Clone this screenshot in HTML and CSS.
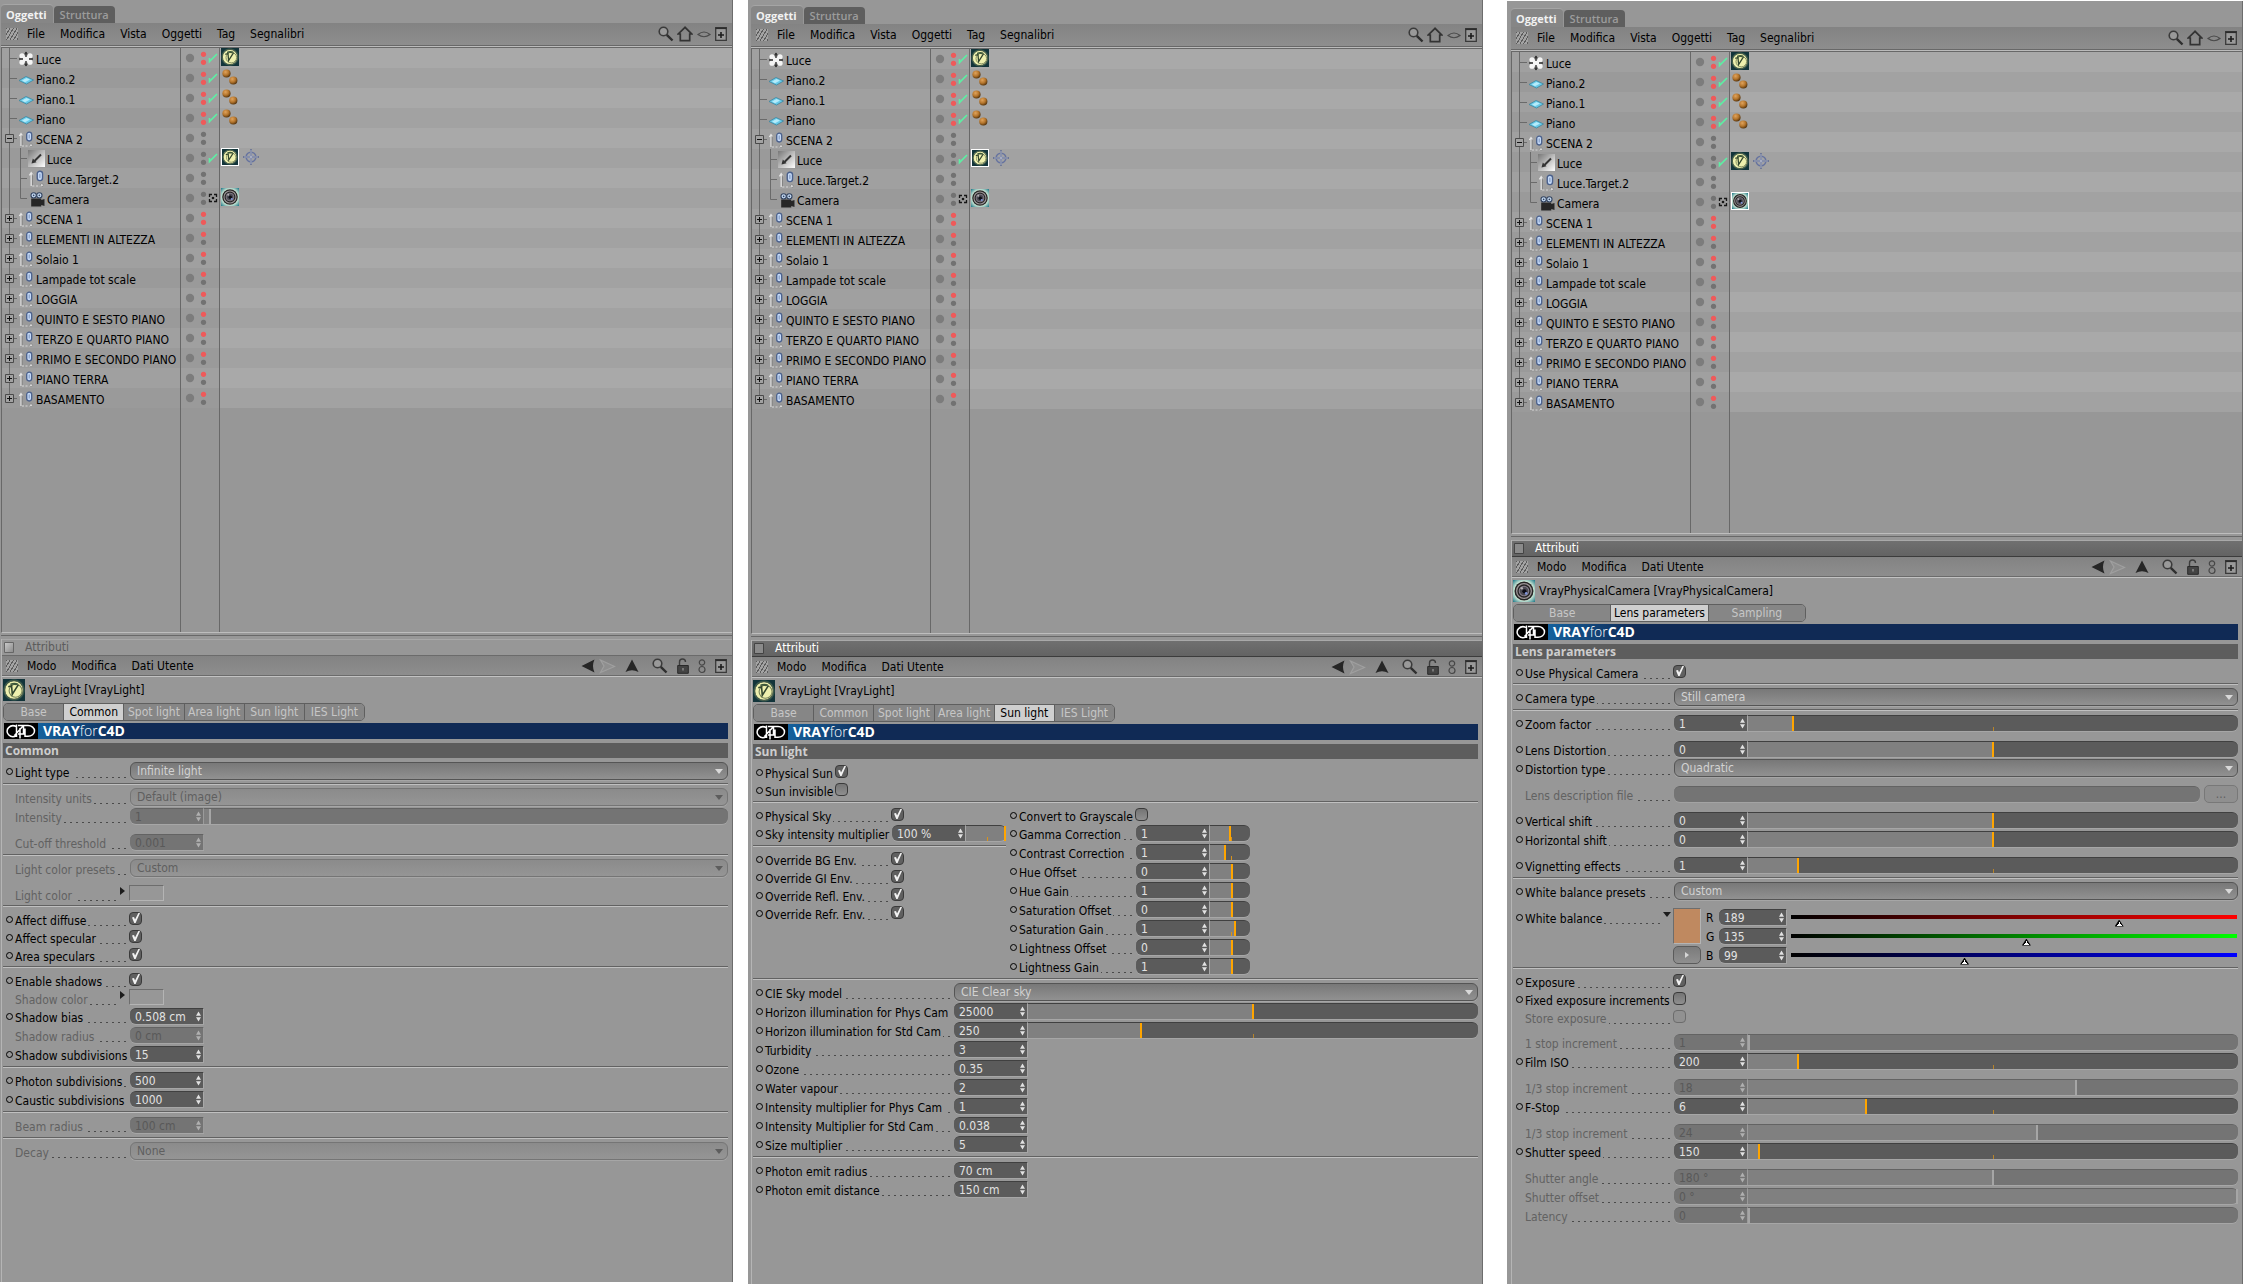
FILE: index.html
```html
<!DOCTYPE html>
<html lang="it">
<head>
<meta charset="utf-8">
<title>VRAYforC4D – Oggetti e Attributi</title>
<link rel="stylesheet" href="styles.css">
</head>
<body>
<svg class="defs" aria-hidden="true">
  <defs>
    <radialGradient id="gBall" cx=".38" cy=".32" r=".7"><stop offset="0" stop-color="#e0a35c"/><stop offset=".55" stop-color="#b4752c"/><stop offset="1" stop-color="#53320c"/></radialGradient>
    <radialGradient id="gV"><stop offset=".6" stop-color="#b9d58a"/><stop offset="1" stop-color="#12343a"/></radialGradient>
    <radialGradient id="gCam" r=".7"><stop offset=".6" stop-color="#d9f0dc"/><stop offset="1" stop-color="#1d7686"/></radialGradient>
    <linearGradient id="gSpot" x1="0" y1="0" x2="1" y2="1"><stop offset="0" stop-color="#777"/><stop offset="1" stop-color="#fff"/></linearGradient>
    <linearGradient id="gBox" x1="0" y1="0" x2="1" y2="1"><stop offset="0" stop-color="#ccc"/><stop offset="1" stop-color="#888"/></linearGradient>
  </defs>
  <symbol id="t-leaf" viewBox="0 0 16 20"><path d="M7.500 0V20M7 10.500H15" stroke="#6a6a6a" fill="none"/></symbol>
  <symbol id="t-plus" viewBox="0 0 16 20"><path d="M7.500 0V20M7 10.500H15" stroke="#6a6a6a" fill="none"/><path d="M3.500 6.500h8v8h-8z" fill="#a2a2a2" stroke="#4a4a4a"/><path d="M5 10.500h5M7.500 8v5" stroke="#111"/></symbol>
  <symbol id="t-last" viewBox="0 0 16 20"><path d="M7.500 0V10M7 10.500H15" stroke="#6a6a6a" fill="none"/><path d="M3.500 6.500h8v8h-8z" fill="#a2a2a2" stroke="#4a4a4a"/><path d="M5 10.500h5M7.500 8v5" stroke="#111"/></symbol>
  <symbol id="t-minus" viewBox="0 0 16 20"><path d="M7.500 0V20M7 10.500H15" stroke="#6a6a6a" fill="none"/><path d="M3.500 6.500h8v8h-8z" fill="#a2a2a2" stroke="#4a4a4a"/><path d="M5 10.500h5" stroke="#111"/></symbol>
  <symbol id="t-child" viewBox="0 0 26 20"><path d="M7.500 0V20M18.500 0V20M18 10.500H25" stroke="#6a6a6a" fill="none"/></symbol>
  <symbol id="t-clast" viewBox="0 0 26 20"><path d="M7.500 0V20M18.500 0V10.500H25" stroke="#6a6a6a" fill="none"/></symbol>

  <symbol id="i-omni" viewBox="0 0 16 16"><g fill="#f4f4f4"><circle cx="4" cy="4.800" r="2.600"/><circle cx="12" cy="4.800" r="2.600"/><circle cx="4" cy="11.200" r="2.600"/><circle cx="12" cy="11.200" r="2.600"/><circle cx="8" cy="8" r="3.400"/></g><path d="M8 6V1M8 10V15M1 8h4M11 8h4" stroke="#333" stroke-width="1.400"/><path d="M6 3.200L8 .500 10 3.200zM6 12.800L8 15.500 10 12.800z" fill="#333"/></symbol>
  <symbol id="i-plane" viewBox="0 0 16 16"><path d="M1 9.500L8 5.500 15.500 9 8.500 13z" fill="#6acbe9" stroke="#347f99" stroke-width=".7"/><path d="M4 9.500l4.500-2.500 3.500 1.500L7 11.300z" fill="#b5ecfb"/></symbol>
  <symbol id="i-null" viewBox="0 0 16 16"><path d="M3 3V15M1.300 5L3 2.500l1.700 2.500" stroke="#e4e4e4" fill="none" stroke-width="1.200"/><path d="M4.200 4V14.500" stroke="#777" stroke-width=".7"/><path d="M4 15H14" stroke="#d6d6d6" stroke-dasharray="2 1.500"/><rect x="8.700" y="1.200" width="5" height="8.800" rx="2.400" fill="#c4d9f7" stroke="#4b618c" stroke-width="1.300"/><path d="M11.200 3.500v4" stroke="#6b83ad" stroke-width=".8"/><circle cx="13" cy="14.300" r="1.500" fill="#d8d8d8" stroke="#777" stroke-width=".6"/></symbol>
  <symbol id="i-spot" viewBox="0 0 17 17"><path d="M0 0h17v17H0z" fill="url(#gSpot)"/><path d="M13 4.500L6.500 11" stroke="#333" stroke-width="2"/><path d="M3.500 13.500l1.300-5 3.700 3.700z" fill="#333"/></symbol>
  <symbol id="i-cam" viewBox="0 0 16 16"><path d="M3 8h9.500v1.500L15.500 8.500V15L12.500 14v1.500H3z" fill="#262626"/><circle cx="5.300" cy="5" r="2.500" fill="#c7dcf5" stroke="#31425e"/><circle cx="10.700" cy="5" r="2.500" fill="#c7dcf5" stroke="#31425e"/><circle cx="5.300" cy="5" r=".8" fill="#31425e"/><circle cx="10.700" cy="5" r=".8" fill="#31425e"/></symbol>
  <symbol id="i-v" viewBox="0 0 18 18"><path d="M0 0h18v18H0z" fill="url(#gV)"/><circle cx="9" cy="9" r="7.600" fill="#eef0ae" stroke="#30443a" stroke-width=".8"/><circle cx="10.300" cy="9.600" r="5.300" fill="none" stroke="#78855a" stroke-width=".9"/><path d="M4.300 6.300L7 5.500 7.600 12.500 12.600 4.600" fill="none" stroke="#33472f" stroke-width="1.300"/><path d="M6 3.700Q9 2.300 12.500 3.600L11 5.200Q8.500 4.500 6 5z" fill="#3d573a"/></symbol>
  <symbol id="i-lens" viewBox="0 0 18 18"><path d="M0 0h18v18H0z" fill="url(#gCam)"/><circle cx="9" cy="9" r="7.800" fill="#252525"/><circle cx="9" cy="9" r="6" fill="none" stroke="#9b9395" stroke-width="1.100"/><circle cx="9" cy="9" r="3.900" fill="#4b4a52" stroke="#877f8c" stroke-width=".9"/><circle cx="9.300" cy="9.300" r="1.700" fill="#0d0d16"/><circle cx="10.800" cy="11" r="1.100" fill="#7d93d8"/><circle cx="7.200" cy="6.800" r="1" fill="#b4b0b4"/></symbol>
  <symbol id="i-balls" viewBox="0 0 18 18"><circle cx="5.500" cy="5.500" r="4.100" fill="url(#gBall)"/><circle cx="12.300" cy="12.500" r="4.100" fill="url(#gBall)"/></symbol>
  <symbol id="i-target" viewBox="0 0 18 18"><circle cx="9" cy="9" r="4.800" fill="none" stroke="#66739f" stroke-width="1.600"/><circle cx="9" cy="9" r="2" fill="#8d9cce"/><path d="M9 1v16M1 9h16" stroke="#525d80" stroke-width="1.800"/><path d="M9 1.500v15M1.500 9h15" stroke="#d6dae8" stroke-width=".8"/></symbol>

  <symbol id="s-rr" viewBox="0 0 38 20"><circle cx="9" cy="10" r="4.200" fill="#7c7c7c"/><circle cx="22.500" cy="6.300" r="2.600" fill="#ee5a5a"/><circle cx="22.500" cy="14.300" r="2.600" fill="#ee5a5a"/></symbol>
  <symbol id="s-rg" viewBox="0 0 38 20"><circle cx="9" cy="10" r="4.200" fill="#7c7c7c"/><circle cx="22.500" cy="6.300" r="2.600" fill="#ee5a5a"/><circle cx="22.500" cy="14.300" r="2.600" fill="#727272"/></symbol>
  <symbol id="s-gg" viewBox="0 0 38 20"><circle cx="9" cy="10" r="4.200" fill="#7c7c7c"/><circle cx="22.500" cy="6.300" r="2.600" fill="#727272"/><circle cx="22.500" cy="14.300" r="2.600" fill="#727272"/></symbol>
  <symbol id="s-rrc" viewBox="0 0 38 20"><use href="#s-rr" width="38" height="20"/><path d="M28.500 10v3.500l7.500-7.500" fill="none" stroke="#5cf0a4" stroke-width="1.600"/></symbol>
  <symbol id="s-ggc" viewBox="0 0 38 20"><use href="#s-gg" width="38" height="20"/><path d="M28.500 10v3.500l7.500-7.500" fill="none" stroke="#5cf0a4" stroke-width="1.600"/></symbol>
  <symbol id="s-ggx" viewBox="0 0 38 20"><use href="#s-gg" width="38" height="20"/><path d="M28.500 9V6.500H31M33 6.500h2.500V9M35.500 11v2.500H33M31 13.500h-2.500V11" fill="none" stroke="#161616" stroke-width="1.300"/><circle cx="32" cy="10" r="1.300" fill="#161616"/></symbol>

  <symbol id="b-find" viewBox="0 0 16 16"><circle cx="5.500" cy="5.500" r="4.300" fill="#999" stroke="#3b3b3b" stroke-width="1.600"/><path d="M8.800 8.800L14.500 14.500" stroke="#2e2e2e" stroke-width="2.400"/></symbol>
  <symbol id="b-home" viewBox="0 0 16 16"><path d="M8 1.300L1.300 8H3.300V14.700H12.700V8H14.700z" fill="none" stroke="#333" stroke-width="1.700"/></symbol>
  <symbol id="b-eye" viewBox="0 0 16 16"><path d="M2 8.500Q8 3.500 14 8.500Q8 13 2 8.500z" fill="none" stroke="#4a4a4a" stroke-width="1.200"/></symbol>
  <symbol id="b-add" viewBox="0 0 12 16"><path d="M.7 1.700h10.600v12.600H.7z" fill="#999" stroke="#3a3a3a" stroke-width="1.300"/><path d="M.5 2.300h11" stroke="#2c2c2c" stroke-width="1.600"/><path d="M3 9h6M6 6v6" stroke="#1c1c1c" stroke-width="1.600"/></symbol>
  <symbol id="b-prev" viewBox="0 0 14 16"><path d="M.5 8L13.500 1.500Q10.500 8 13.500 14.500z" fill="#262626"/></symbol>
  <symbol id="b-next" viewBox="0 0 17 16"><path d="M1.500 2L15.500 8.500 1.500 14.500 5 8z" fill="#8f8f8f" stroke="#9f9f9f" stroke-width="1.200"/></symbol>
  <symbol id="b-up" viewBox="0 0 14 16"><path d="M7 1.500L13.500 14Q7 10.500.5 14z" fill="#262626"/></symbol>
  <symbol id="b-lock" viewBox="0 0 12 16"><path d="M2.500 7V4Q2.500 1 5.500 1T8.500 4" fill="none" stroke="#3d3d3d" stroke-width="1.400"/><path d="M.7 7.500h10.600v7.800H.7z" fill="#444" stroke="#2a2a2a"/><path d="M6 10v2.500" stroke="#aaa"/></symbol>
  <symbol id="b-eight" viewBox="0 0 8 16"><circle cx="4" cy="4.500" r="2.700" fill="none" stroke="#474747" stroke-width="1.200"/><circle cx="4" cy="11.500" r="3" fill="none" stroke="#474747" stroke-width="1.200"/></symbol>
  <symbol id="spin" viewBox="0 0 6 12"><path d="M0 5L3 0l3 5zM0 7l3 5 3-5z" fill="currentColor"/></symbol>
  <symbol id="logo" viewBox="0 0 34 16"><path d="M0 0h34v16H0z" fill="#000"/><path d="M12.500 3.800A6 5.300 0 1 0 12.500 12.500M12.500 1.500V14M10.500 12.500L19.500 2.500M16 5V15.500M19.500 2.500V10.500M14 2.500H24A6.500 5.400 0 0 1 24 13.300H21V5.500M14 11H21" fill="none" stroke="#fff" stroke-width="1.500"/></symbol>
</svg>

<main class="shots">
<!-- Pannello 1: VrayLight, scheda Common -->
<section class="panel p1">
  <nav class="dock"><button class="on">Oggetti</button><button>Struttura</button></nav>
  <div class="bar"><i class="grip"></i><button>File</button><button>Modifica</button><button>Vista</button><button>Oggetti</button><button>Tag</button><button>Segnalibri</button>
    <span class="tools obj"><svg width="16" height="16"><use href="#b-find"/></svg><svg width="16" height="16"><use href="#b-home"/></svg><svg width="16" height="16"><use href="#b-eye"/></svg><svg width="12" height="16"><use href="#b-add"/></svg></span></div>
  <ul class="tree">
    <li><div><svg class="tw"><use href="#t-leaf"/></svg><svg class="ic"><use href="#i-omni"/></svg>Luce</div><div><svg class="st"><use href="#s-rrc"/></svg></div><div><svg class="tg"><use href="#i-v"/></svg></div></li>
    <li><div><svg class="tw"><use href="#t-leaf"/></svg><svg class="ic"><use href="#i-plane"/></svg>Piano.2</div><div><svg class="st"><use href="#s-rrc"/></svg></div><div><svg class="tg"><use href="#i-balls"/></svg></div></li>
    <li><div><svg class="tw"><use href="#t-leaf"/></svg><svg class="ic"><use href="#i-plane"/></svg>Piano.1</div><div><svg class="st"><use href="#s-rrc"/></svg></div><div><svg class="tg"><use href="#i-balls"/></svg></div></li>
    <li><div><svg class="tw"><use href="#t-leaf"/></svg><svg class="ic"><use href="#i-plane"/></svg>Piano</div><div><svg class="st"><use href="#s-rrc"/></svg></div><div><svg class="tg"><use href="#i-balls"/></svg></div></li>
    <li><div><svg class="tw"><use href="#t-minus"/></svg><svg class="ic"><use href="#i-null"/></svg>SCENA 2</div><div><svg class="st"><use href="#s-gg"/></svg></div><div></div></li>
    <li class="sub"><div><svg class="tw"><use href="#t-child"/></svg><svg class="ic"><use href="#i-spot"/></svg>Luce</div><div><svg class="st"><use href="#s-ggc"/></svg></div><div><svg class="tg picked"><use href="#i-v"/></svg><svg class="tg"><use href="#i-target"/></svg></div></li>
    <li class="sub"><div><svg class="tw"><use href="#t-child"/></svg><svg class="ic"><use href="#i-null"/></svg>Luce.Target.2</div><div><svg class="st"><use href="#s-gg"/></svg></div><div></div></li>
    <li class="sub"><div><svg class="tw"><use href="#t-clast"/></svg><svg class="ic"><use href="#i-cam"/></svg>Camera</div><div><svg class="st"><use href="#s-ggx"/></svg></div><div><svg class="tg"><use href="#i-lens"/></svg></div></li>
    <li><div><svg class="tw"><use href="#t-plus"/></svg><svg class="ic"><use href="#i-null"/></svg>SCENA 1</div><div><svg class="st"><use href="#s-rr"/></svg></div><div></div></li>
    <li><div><svg class="tw"><use href="#t-plus"/></svg><svg class="ic"><use href="#i-null"/></svg>ELEMENTI IN ALTEZZA</div><div><svg class="st"><use href="#s-rg"/></svg></div><div></div></li>
    <li><div><svg class="tw"><use href="#t-plus"/></svg><svg class="ic"><use href="#i-null"/></svg>Solaio 1</div><div><svg class="st"><use href="#s-rg"/></svg></div><div></div></li>
    <li><div><svg class="tw"><use href="#t-plus"/></svg><svg class="ic"><use href="#i-null"/></svg>Lampade tot scale</div><div><svg class="st"><use href="#s-rg"/></svg></div><div></div></li>
    <li><div><svg class="tw"><use href="#t-plus"/></svg><svg class="ic"><use href="#i-null"/></svg>LOGGIA</div><div><svg class="st"><use href="#s-rg"/></svg></div><div></div></li>
    <li><div><svg class="tw"><use href="#t-plus"/></svg><svg class="ic"><use href="#i-null"/></svg>QUINTO E SESTO PIANO</div><div><svg class="st"><use href="#s-rg"/></svg></div><div></div></li>
    <li><div><svg class="tw"><use href="#t-plus"/></svg><svg class="ic"><use href="#i-null"/></svg>TERZO E QUARTO PIANO</div><div><svg class="st"><use href="#s-rg"/></svg></div><div></div></li>
    <li><div><svg class="tw"><use href="#t-plus"/></svg><svg class="ic"><use href="#i-null"/></svg>PRIMO E SECONDO PIANO</div><div><svg class="st"><use href="#s-rg"/></svg></div><div></div></li>
    <li><div><svg class="tw"><use href="#t-plus"/></svg><svg class="ic"><use href="#i-null"/></svg>PIANO TERRA</div><div><svg class="st"><use href="#s-rg"/></svg></div><div></div></li>
    <li><div><svg class="tw"><use href="#t-last"/></svg><svg class="ic"><use href="#i-null"/></svg>BASAMENTO</div><div><svg class="st"><use href="#s-rg"/></svg></div><div></div></li>
  </ul>
  <div class="attrs">
    <h2 class="title idle"><svg width="10" height="11"><path d="M.5.5h9v10h-9z" fill="url(#gBox)" stroke="#666"/></svg>Attributi</h2>
    <div class="bar low"><i class="grip"></i><button>Modo</button><button>Modifica</button><button>Dati Utente</button>
      <span class="tools att"><svg width="14" height="16"><use href="#b-prev"/></svg><svg width="17" height="16"><use href="#b-next"/></svg><svg width="14" height="16"><use href="#b-up"/></svg><svg width="16" height="16"><use href="#b-find"/></svg><svg width="12" height="16"><use href="#b-lock"/></svg><svg width="8" height="16"><use href="#b-eight"/></svg><svg width="12" height="16"><use href="#b-add"/></svg></span></div>
    <div class="object"><svg><use href="#i-v"/></svg>VrayLight [VrayLight]</div>
    <nav class="tabs"><button>Base</button><button class="on">Common</button><button>Spot light</button><button>Area light</button><button>Sun light</button><button>IES Light</button></nav>
    <div class="banner"><svg width="34" height="16"><use href="#logo"/></svg><b>VRAY<span>for</span>C4D</b></div>
    <h3>Common</h3>
    <form class="form">
      <div class="f"><label for="a1">Light type</label><div class="v"><span class="sel"><select id="a1"><option>Infinite light</option></select></span></div></div>
      <hr>
      <div class="f off"><label for="a2">Intensity units</label><div class="v"><span class="sel"><select id="a2" disabled><option>Default (image)</option></select></span></div></div>
      <div class="f off"><label for="a3">Intensity</label><div class="v"><span class="num"><input id="a3" value="1" disabled><svg><use href="#spin"/></svg></span><input type="range" aria-label="Intensity" value="1" style="--v:1%" disabled></div></div>
      <div class="f off gap"><label for="a4">Cut-off threshold</label><div class="v"><span class="num"><input id="a4" value="0.001" disabled><svg><use href="#spin"/></svg></span></div></div>
      <hr>
      <div class="f off"><label for="a5">Light color presets</label><div class="v"><span class="sel"><select id="a5" disabled><option>Custom</option></select></span></div></div>
      <div class="f c off gap"><label for="a6" class="more">Light color</label><div class="v"><button id="a6" type="button" class="swatch" aria-label="Light color"></button></div></div>
      <hr>
      <div class="f c"><label for="a7">Affect diffuse</label><div class="v"><input id="a7" type="checkbox" checked></div></div>
      <div class="f c"><label for="a8">Affect specular</label><div class="v"><input id="a8" type="checkbox" checked></div></div>
      <div class="f c"><label for="a9">Area speculars</label><div class="v"><input id="a9" type="checkbox" checked></div></div>
      <hr>
      <div class="f c"><label for="a10">Enable shadows</label><div class="v"><input id="a10" type="checkbox" checked></div></div>
      <div class="f c off"><label for="a11" class="more">Shadow color</label><div class="v"><button id="a11" type="button" class="swatch" aria-label="Shadow color"></button></div></div>
      <div class="f"><label for="a12">Shadow bias</label><div class="v"><span class="num"><input id="a12" value="0.508 cm"><svg><use href="#spin"/></svg></span></div></div>
      <div class="f off"><label for="a13">Shadow radius</label><div class="v"><span class="num"><input id="a13" value="0 cm" disabled><svg><use href="#spin"/></svg></span></div></div>
      <div class="f"><label for="a14">Shadow subdivisions</label><div class="v"><span class="num"><input id="a14" value="15"><svg><use href="#spin"/></svg></span></div></div>
      <hr>
      <div class="f"><label for="a15">Photon subdivisions</label><div class="v"><span class="num"><input id="a15" value="500"><svg><use href="#spin"/></svg></span></div></div>
      <div class="f"><label for="a16">Caustic subdivisions</label><div class="v"><span class="num"><input id="a16" value="1000"><svg><use href="#spin"/></svg></span></div></div>
      <hr>
      <div class="f off"><label for="a17">Beam radius</label><div class="v"><span class="num"><input id="a17" value="100 cm" disabled><svg><use href="#spin"/></svg></span></div></div>
      <hr>
      <div class="f off"><label for="a18">Decay</label><div class="v"><span class="sel"><select id="a18" disabled><option>None</option></select></span></div></div>
    </form>
  </div>
</section>

<!-- Pannello 2: VrayLight, scheda Sun light -->
<section class="panel p2">
  <nav class="dock"><button class="on">Oggetti</button><button>Struttura</button></nav>
  <div class="bar"><i class="grip"></i><button>File</button><button>Modifica</button><button>Vista</button><button>Oggetti</button><button>Tag</button><button>Segnalibri</button>
    <span class="tools obj"><svg width="16" height="16"><use href="#b-find"/></svg><svg width="16" height="16"><use href="#b-home"/></svg><svg width="16" height="16"><use href="#b-eye"/></svg><svg width="12" height="16"><use href="#b-add"/></svg></span></div>
  <ul class="tree">
    <li><div><svg class="tw"><use href="#t-leaf"/></svg><svg class="ic"><use href="#i-omni"/></svg>Luce</div><div><svg class="st"><use href="#s-rrc"/></svg></div><div><svg class="tg"><use href="#i-v"/></svg></div></li>
    <li><div><svg class="tw"><use href="#t-leaf"/></svg><svg class="ic"><use href="#i-plane"/></svg>Piano.2</div><div><svg class="st"><use href="#s-rrc"/></svg></div><div><svg class="tg"><use href="#i-balls"/></svg></div></li>
    <li><div><svg class="tw"><use href="#t-leaf"/></svg><svg class="ic"><use href="#i-plane"/></svg>Piano.1</div><div><svg class="st"><use href="#s-rrc"/></svg></div><div><svg class="tg"><use href="#i-balls"/></svg></div></li>
    <li><div><svg class="tw"><use href="#t-leaf"/></svg><svg class="ic"><use href="#i-plane"/></svg>Piano</div><div><svg class="st"><use href="#s-rrc"/></svg></div><div><svg class="tg"><use href="#i-balls"/></svg></div></li>
    <li><div><svg class="tw"><use href="#t-minus"/></svg><svg class="ic"><use href="#i-null"/></svg>SCENA 2</div><div><svg class="st"><use href="#s-gg"/></svg></div><div></div></li>
    <li class="sub"><div><svg class="tw"><use href="#t-child"/></svg><svg class="ic"><use href="#i-spot"/></svg>Luce</div><div><svg class="st"><use href="#s-ggc"/></svg></div><div><svg class="tg picked"><use href="#i-v"/></svg><svg class="tg"><use href="#i-target"/></svg></div></li>
    <li class="sub"><div><svg class="tw"><use href="#t-child"/></svg><svg class="ic"><use href="#i-null"/></svg>Luce.Target.2</div><div><svg class="st"><use href="#s-gg"/></svg></div><div></div></li>
    <li class="sub"><div><svg class="tw"><use href="#t-clast"/></svg><svg class="ic"><use href="#i-cam"/></svg>Camera</div><div><svg class="st"><use href="#s-ggx"/></svg></div><div><svg class="tg"><use href="#i-lens"/></svg></div></li>
    <li><div><svg class="tw"><use href="#t-plus"/></svg><svg class="ic"><use href="#i-null"/></svg>SCENA 1</div><div><svg class="st"><use href="#s-rr"/></svg></div><div></div></li>
    <li><div><svg class="tw"><use href="#t-plus"/></svg><svg class="ic"><use href="#i-null"/></svg>ELEMENTI IN ALTEZZA</div><div><svg class="st"><use href="#s-rg"/></svg></div><div></div></li>
    <li><div><svg class="tw"><use href="#t-plus"/></svg><svg class="ic"><use href="#i-null"/></svg>Solaio 1</div><div><svg class="st"><use href="#s-rg"/></svg></div><div></div></li>
    <li><div><svg class="tw"><use href="#t-plus"/></svg><svg class="ic"><use href="#i-null"/></svg>Lampade tot scale</div><div><svg class="st"><use href="#s-rg"/></svg></div><div></div></li>
    <li><div><svg class="tw"><use href="#t-plus"/></svg><svg class="ic"><use href="#i-null"/></svg>LOGGIA</div><div><svg class="st"><use href="#s-rg"/></svg></div><div></div></li>
    <li><div><svg class="tw"><use href="#t-plus"/></svg><svg class="ic"><use href="#i-null"/></svg>QUINTO E SESTO PIANO</div><div><svg class="st"><use href="#s-rg"/></svg></div><div></div></li>
    <li><div><svg class="tw"><use href="#t-plus"/></svg><svg class="ic"><use href="#i-null"/></svg>TERZO E QUARTO PIANO</div><div><svg class="st"><use href="#s-rg"/></svg></div><div></div></li>
    <li><div><svg class="tw"><use href="#t-plus"/></svg><svg class="ic"><use href="#i-null"/></svg>PRIMO E SECONDO PIANO</div><div><svg class="st"><use href="#s-rg"/></svg></div><div></div></li>
    <li><div><svg class="tw"><use href="#t-plus"/></svg><svg class="ic"><use href="#i-null"/></svg>PIANO TERRA</div><div><svg class="st"><use href="#s-rg"/></svg></div><div></div></li>
    <li><div><svg class="tw"><use href="#t-last"/></svg><svg class="ic"><use href="#i-null"/></svg>BASAMENTO</div><div><svg class="st"><use href="#s-rg"/></svg></div><div></div></li>
  </ul>
  <div class="attrs">
    <h2 class="title"><svg width="10" height="11"><path d="M.5.5h9v10h-9z" fill="#8a8a8a" stroke="#444"/></svg>Attributi</h2>
    <div class="bar low"><i class="grip"></i><button>Modo</button><button>Modifica</button><button>Dati Utente</button>
      <span class="tools att"><svg width="14" height="16"><use href="#b-prev"/></svg><svg width="17" height="16"><use href="#b-next"/></svg><svg width="14" height="16"><use href="#b-up"/></svg><svg width="16" height="16"><use href="#b-find"/></svg><svg width="12" height="16"><use href="#b-lock"/></svg><svg width="8" height="16"><use href="#b-eight"/></svg><svg width="12" height="16"><use href="#b-add"/></svg></span></div>
    <div class="object"><svg><use href="#i-v"/></svg>VrayLight [VrayLight]</div>
    <nav class="tabs"><button>Base</button><button>Common</button><button>Spot light</button><button>Area light</button><button class="on">Sun light</button><button>IES Light</button></nav>
    <div class="banner"><svg width="34" height="16"><use href="#logo"/></svg><b>VRAY<span>for</span>C4D</b></div>
    <h3>Sun light</h3>
    <form class="form">
      <div class="sun">
        <div class="f c"><label for="b1">Physical Sun</label><div class="v"><input id="b1" type="checkbox" checked></div></div>
        <div class="f c"><label for="b2">Sun invisible</label><div class="v"><input id="b2" type="checkbox"></div></div>
      </div>
      <hr>
      <div class="duo">
        <div class="sky">
          <div class="f c"><label for="b3">Physical Sky</label><div class="v"><input id="b3" type="checkbox" checked></div></div>
          <div class="f"><label for="b4">Sky intensity multiplier</label><div class="v"><span class="num"><input id="b4" value="100 %"><svg><use href="#spin"/></svg></span><input type="range" class="tick" aria-label="Sky intensity multiplier" value="100" style="--v:100%"></div></div>
          <hr>
          <div class="f c"><label for="b5">Override BG Env.</label><div class="v"><input id="b5" type="checkbox" checked></div></div>
          <div class="f c"><label for="b6">Override GI Env.</label><div class="v"><input id="b6" type="checkbox" checked></div></div>
          <div class="f c"><label for="b7">Override Refl. Env.</label><div class="v"><input id="b7" type="checkbox" checked></div></div>
          <div class="f c"><label for="b8">Override Refr. Env.</label><div class="v"><input id="b8" type="checkbox" checked></div></div>
        </div>
        <div class="tone">
          <div class="f c"><label for="b9">Convert to Grayscale</label><div class="v"><input id="b9" type="checkbox"></div></div>
          <div class="f"><label for="b10">Gamma Correction</label><div class="v"><span class="num"><input id="b10" value="1"><svg><use href="#spin"/></svg></span><input type="range" class="tick" aria-label="Gamma Correction" value="50" style="--v:50%"></div></div>
          <div class="f"><label for="b11">Contrast Correction</label><div class="v"><span class="num"><input id="b11" value="1"><svg><use href="#spin"/></svg></span><input type="range" class="tick" aria-label="Contrast Correction" value="38" style="--v:38%"></div></div>
          <div class="f"><label for="b12">Hue Offset</label><div class="v"><span class="num"><input id="b12" value="0"><svg><use href="#spin"/></svg></span><input type="range" aria-label="Hue Offset" value="55" style="--v:55%"></div></div>
          <div class="f"><label for="b13">Hue Gain</label><div class="v"><span class="num"><input id="b13" value="1"><svg><use href="#spin"/></svg></span><input type="range" aria-label="Hue Gain" value="55" style="--v:55%"></div></div>
          <div class="f"><label for="b14">Saturation Offset</label><div class="v"><span class="num"><input id="b14" value="0"><svg><use href="#spin"/></svg></span><input type="range" aria-label="Saturation Offset" value="55" style="--v:55%"></div></div>
          <div class="f"><label for="b15">Saturation Gain</label><div class="v"><span class="num"><input id="b15" value="1"><svg><use href="#spin"/></svg></span><input type="range" class="tick" aria-label="Saturation Gain" value="62" style="--v:62%"></div></div>
          <div class="f"><label for="b16">Lightness Offset</label><div class="v"><span class="num"><input id="b16" value="0"><svg><use href="#spin"/></svg></span><input type="range" aria-label="Lightness Offset" value="55" style="--v:55%"></div></div>
          <div class="f"><label for="b17">Lightness Gain</label><div class="v"><span class="num"><input id="b17" value="1"><svg><use href="#spin"/></svg></span><input type="range" aria-label="Lightness Gain" value="55" style="--v:55%"></div></div>
        </div>
      </div>
      <hr>
      <div class="f"><label for="b18">CIE Sky model</label><div class="v"><span class="sel"><select id="b18"><option>CIE Clear sky</option></select></span></div></div>
      <div class="f"><label for="b19">Horizon illumination for Phys Cam</label><div class="v"><span class="num"><input id="b19" value="25000"><svg><use href="#spin"/></svg></span><input type="range" aria-label="Horizon illumination for Phys Cam" value="50" style="--v:50%"></div></div>
      <div class="f"><label for="b20">Horizon illumination for Std Cam</label><div class="v"><span class="num"><input id="b20" value="250"><svg><use href="#spin"/></svg></span><input type="range" class="tick" aria-label="Horizon illumination for Std Cam" value="25" style="--v:25%"></div></div>
      <div class="f"><label for="b21">Turbidity</label><div class="v"><span class="num"><input id="b21" value="3"><svg><use href="#spin"/></svg></span></div></div>
      <div class="f"><label for="b22">Ozone</label><div class="v"><span class="num"><input id="b22" value="0.35"><svg><use href="#spin"/></svg></span></div></div>
      <div class="f"><label for="b23">Water vapour</label><div class="v"><span class="num"><input id="b23" value="2"><svg><use href="#spin"/></svg></span></div></div>
      <div class="f"><label for="b24">Intensity multiplier for Phys Cam</label><div class="v"><span class="num"><input id="b24" value="1"><svg><use href="#spin"/></svg></span></div></div>
      <div class="f"><label for="b25">Intensity Multiplier for Std Cam</label><div class="v"><span class="num"><input id="b25" value="0.038"><svg><use href="#spin"/></svg></span></div></div>
      <div class="f"><label for="b26">Size multiplier</label><div class="v"><span class="num"><input id="b26" value="5"><svg><use href="#spin"/></svg></span></div></div>
      <hr>
      <div class="f"><label for="b27">Photon emit radius</label><div class="v"><span class="num"><input id="b27" value="70 cm"><svg><use href="#spin"/></svg></span></div></div>
      <div class="f"><label for="b28">Photon emit distance</label><div class="v"><span class="num"><input id="b28" value="150 cm"><svg><use href="#spin"/></svg></span></div></div>
    </form>
  </div>
</section>

<!-- Pannello 3: VrayPhysicalCamera, scheda Lens parameters -->
<section class="panel p3">
  <nav class="dock"><button class="on">Oggetti</button><button>Struttura</button></nav>
  <div class="bar"><i class="grip"></i><button>File</button><button>Modifica</button><button>Vista</button><button>Oggetti</button><button>Tag</button><button>Segnalibri</button>
    <span class="tools obj"><svg width="16" height="16"><use href="#b-find"/></svg><svg width="16" height="16"><use href="#b-home"/></svg><svg width="16" height="16"><use href="#b-eye"/></svg><svg width="12" height="16"><use href="#b-add"/></svg></span></div>
  <ul class="tree">
    <li><div><svg class="tw"><use href="#t-leaf"/></svg><svg class="ic"><use href="#i-omni"/></svg>Luce</div><div><svg class="st"><use href="#s-rrc"/></svg></div><div><svg class="tg"><use href="#i-v"/></svg></div></li>
    <li><div><svg class="tw"><use href="#t-leaf"/></svg><svg class="ic"><use href="#i-plane"/></svg>Piano.2</div><div><svg class="st"><use href="#s-rrc"/></svg></div><div><svg class="tg"><use href="#i-balls"/></svg></div></li>
    <li><div><svg class="tw"><use href="#t-leaf"/></svg><svg class="ic"><use href="#i-plane"/></svg>Piano.1</div><div><svg class="st"><use href="#s-rrc"/></svg></div><div><svg class="tg"><use href="#i-balls"/></svg></div></li>
    <li><div><svg class="tw"><use href="#t-leaf"/></svg><svg class="ic"><use href="#i-plane"/></svg>Piano</div><div><svg class="st"><use href="#s-rrc"/></svg></div><div><svg class="tg"><use href="#i-balls"/></svg></div></li>
    <li><div><svg class="tw"><use href="#t-minus"/></svg><svg class="ic"><use href="#i-null"/></svg>SCENA 2</div><div><svg class="st"><use href="#s-gg"/></svg></div><div></div></li>
    <li class="sub"><div><svg class="tw"><use href="#t-child"/></svg><svg class="ic"><use href="#i-spot"/></svg>Luce</div><div><svg class="st"><use href="#s-ggc"/></svg></div><div><svg class="tg"><use href="#i-v"/></svg><svg class="tg"><use href="#i-target"/></svg></div></li>
    <li class="sub"><div><svg class="tw"><use href="#t-child"/></svg><svg class="ic"><use href="#i-null"/></svg>Luce.Target.2</div><div><svg class="st"><use href="#s-gg"/></svg></div><div></div></li>
    <li class="sub"><div><svg class="tw"><use href="#t-clast"/></svg><svg class="ic"><use href="#i-cam"/></svg>Camera</div><div><svg class="st"><use href="#s-ggx"/></svg></div><div><svg class="tg picked"><use href="#i-lens"/></svg></div></li>
    <li><div><svg class="tw"><use href="#t-plus"/></svg><svg class="ic"><use href="#i-null"/></svg>SCENA 1</div><div><svg class="st"><use href="#s-rr"/></svg></div><div></div></li>
    <li><div><svg class="tw"><use href="#t-plus"/></svg><svg class="ic"><use href="#i-null"/></svg>ELEMENTI IN ALTEZZA</div><div><svg class="st"><use href="#s-rg"/></svg></div><div></div></li>
    <li><div><svg class="tw"><use href="#t-plus"/></svg><svg class="ic"><use href="#i-null"/></svg>Solaio 1</div><div><svg class="st"><use href="#s-rg"/></svg></div><div></div></li>
    <li><div><svg class="tw"><use href="#t-plus"/></svg><svg class="ic"><use href="#i-null"/></svg>Lampade tot scale</div><div><svg class="st"><use href="#s-rg"/></svg></div><div></div></li>
    <li><div><svg class="tw"><use href="#t-plus"/></svg><svg class="ic"><use href="#i-null"/></svg>LOGGIA</div><div><svg class="st"><use href="#s-rg"/></svg></div><div></div></li>
    <li><div><svg class="tw"><use href="#t-plus"/></svg><svg class="ic"><use href="#i-null"/></svg>QUINTO E SESTO PIANO</div><div><svg class="st"><use href="#s-rg"/></svg></div><div></div></li>
    <li><div><svg class="tw"><use href="#t-plus"/></svg><svg class="ic"><use href="#i-null"/></svg>TERZO E QUARTO PIANO</div><div><svg class="st"><use href="#s-rg"/></svg></div><div></div></li>
    <li><div><svg class="tw"><use href="#t-plus"/></svg><svg class="ic"><use href="#i-null"/></svg>PRIMO E SECONDO PIANO</div><div><svg class="st"><use href="#s-rg"/></svg></div><div></div></li>
    <li><div><svg class="tw"><use href="#t-plus"/></svg><svg class="ic"><use href="#i-null"/></svg>PIANO TERRA</div><div><svg class="st"><use href="#s-rg"/></svg></div><div></div></li>
    <li><div><svg class="tw"><use href="#t-last"/></svg><svg class="ic"><use href="#i-null"/></svg>BASAMENTO</div><div><svg class="st"><use href="#s-rg"/></svg></div><div></div></li>
  </ul>
  <div class="attrs">
    <h2 class="title"><svg width="10" height="11"><path d="M.5.5h9v10h-9z" fill="#8a8a8a" stroke="#444"/></svg>Attributi</h2>
    <div class="bar low"><i class="grip"></i><button>Modo</button><button>Modifica</button><button>Dati Utente</button>
      <span class="tools att"><svg width="14" height="16"><use href="#b-prev"/></svg><svg width="17" height="16"><use href="#b-next"/></svg><svg width="14" height="16"><use href="#b-up"/></svg><svg width="16" height="16"><use href="#b-find"/></svg><svg width="12" height="16"><use href="#b-lock"/></svg><svg width="8" height="16"><use href="#b-eight"/></svg><svg width="12" height="16"><use href="#b-add"/></svg></span></div>
    <div class="object"><svg><use href="#i-lens"/></svg>VrayPhysicalCamera [VrayPhysicalCamera]</div>
    <nav class="tabs wide"><button>Base</button><button class="on">Lens parameters</button><button>Sampling</button></nav>
    <div class="banner"><svg width="34" height="16"><use href="#logo"/></svg><b>VRAY<span>for</span>C4D</b></div>
    <h3>Lens parameters</h3>
    <form class="form">
      <div class="f c"><label for="c1">Use Physical Camera</label><div class="v"><input id="c1" type="checkbox" checked></div></div>
      <hr>
      <div class="f"><label for="c2">Camera type</label><div class="v"><span class="sel"><select id="c2"><option>Still camera</option></select></span></div></div>
      <hr>
      <div class="f"><label for="c3">Zoom factor</label><div class="v"><span class="num"><input id="c3" value="1"><svg><use href="#spin"/></svg></span><input type="range" class="tick" aria-label="Zoom factor" value="9" style="--v:9%"></div></div>
      <div class="f gap"><label for="c4">Lens Distortion</label><div class="v"><span class="num"><input id="c4" value="0"><svg><use href="#spin"/></svg></span><input type="range" aria-label="Lens Distortion" value="50" style="--v:50%"></div></div>
      <div class="f"><label for="c5">Distortion type</label><div class="v"><span class="sel"><select id="c5"><option>Quadratic</option></select></span></div></div>
      <div class="f off gap"><label for="c6">Lens description file</label><div class="v"><input id="c6" class="path" disabled><button type="button" class="btn dots" disabled>...</button></div></div>
      <div class="f gap"><label for="c7">Vertical shift</label><div class="v"><span class="num"><input id="c7" value="0"><svg><use href="#spin"/></svg></span><input type="range" aria-label="Vertical shift" value="50" style="--v:50%"></div></div>
      <div class="f"><label for="c8">Horizontal shift</label><div class="v"><span class="num"><input id="c8" value="0"><svg><use href="#spin"/></svg></span><input type="range" aria-label="Horizontal shift" value="50" style="--v:50%"></div></div>
      <div class="f gap"><label for="c9">Vignetting effects</label><div class="v"><span class="num"><input id="c9" value="1"><svg><use href="#spin"/></svg></span><input type="range" class="tick" aria-label="Vignetting effects" value="10" style="--v:10%"></div></div>
      <hr>
      <div class="f"><label for="c10">White balance presets</label><div class="v"><span class="sel"><select id="c10"><option>Custom</option></select></span></div></div>
      <div class="f gap wb"><label for="c11" class="more">White balance</label>
        <div class="v">
          <div class="pick"><button id="c11" type="button" class="swatch tan" aria-label="White balance"></button><button type="button" class="btn go" aria-label="Apri"></button></div>
          <div class="rgb">
            <label for="c12">R</label><span class="num"><input id="c12" value="189"><svg><use href="#spin"/></svg></span><input type="range" class="chan red" aria-label="Rosso" max="255" value="189">
            <label for="c13">G</label><span class="num"><input id="c13" value="135"><svg><use href="#spin"/></svg></span><input type="range" class="chan green" aria-label="Verde" max="255" value="135">
            <label for="c14">B</label><span class="num"><input id="c14" value="99"><svg><use href="#spin"/></svg></span><input type="range" class="chan blue" aria-label="Blu" max="255" value="99">
          </div>
        </div></div>
      <hr>
      <div class="f c"><label for="c15">Exposure</label><div class="v"><input id="c15" type="checkbox" checked></div></div>
      <div class="f c"><label for="c16">Fixed exposure increments</label><div class="v"><input id="c16" type="checkbox"></div></div>
      <div class="f c off"><label for="c17">Store exposure</label><div class="v"><input id="c17" type="checkbox" disabled></div></div>
      <div class="f off gap"><label for="c18">1 stop increment</label><div class="v"><span class="num"><input id="c18" value="1" disabled><svg><use href="#spin"/></svg></span><input type="range" aria-label="1 stop increment" value="0" style="--v:0%" disabled></div></div>
      <div class="f"><label for="c19">Film ISO</label><div class="v"><span class="num"><input id="c19" value="200"><svg><use href="#spin"/></svg></span><input type="range" class="tick" aria-label="Film ISO" value="10" style="--v:10%"></div></div>
      <div class="f off gap"><label for="c20">1/3 stop increment</label><div class="v"><span class="num"><input id="c20" value="18" disabled><svg><use href="#spin"/></svg></span><input type="range" aria-label="1/3 stop increment ISO" value="67" style="--v:67%" disabled></div></div>
      <div class="f"><label for="c21">F-Stop</label><div class="v"><span class="num"><input id="c21" value="6"><svg><use href="#spin"/></svg></span><input type="range" class="tick" aria-label="F-Stop" value="24" style="--v:24%"></div></div>
      <div class="f off gap"><label for="c22">1/3 stop increment</label><div class="v"><span class="num"><input id="c22" value="24" disabled><svg><use href="#spin"/></svg></span><input type="range" aria-label="1/3 stop increment F" value="59" style="--v:59%" disabled></div></div>
      <div class="f"><label for="c23">Shutter speed</label><div class="v"><span class="num"><input id="c23" value="150"><svg><use href="#spin"/></svg></span><input type="range" class="tick" aria-label="Shutter speed" value="2" style="--v:2%"></div></div>
      <div class="f off gap"><label for="c24">Shutter angle</label><div class="v"><span class="num"><input id="c24" value="180 °" disabled><svg><use href="#spin"/></svg></span><input type="range" aria-label="Shutter angle" value="50" style="--v:50%" disabled></div></div>
      <div class="f off"><label for="c25">Shutter offset</label><div class="v"><span class="num"><input id="c25" value="0 °" disabled><svg><use href="#spin"/></svg></span><input type="range" aria-label="Shutter offset" value="100" style="--v:100%" disabled></div></div>
      <div class="f off"><label for="c26">Latency</label><div class="v"><span class="num"><input id="c26" value="0" disabled><svg><use href="#spin"/></svg></span><input type="range" aria-label="Latency" value="0" style="--v:0%" disabled></div></div>
    </form>
  </div>
</section>
</main>
</body>
</html>
```
FILE: styles.css
```css
* { box-sizing: border-box; }
body {
  margin: 0;
  background: #fff;
  color: #000;
  font: 12px/16px "DejaVu Sans Condensed", "DejaVu Sans", sans-serif;
}
button, input, select { font: inherit; color: inherit; margin: 0; padding: 0; border: 0; background: none; border-radius: 0; }
.defs { display: block; width: 0; height: 0; position: absolute; }
svg { display: block; flex: none; }

.shots {
  display: grid;
  grid-template-columns: 733fr 750fr 760fr;
  min-height: 100vh;
}
.panel { display: flex; flex-direction: column; background: #979797; border-right: 1px solid #6d6d6d; }
.p1 { margin-bottom: 2px; }
.p2 { margin-left: 15px; padding-left: 2px; }
.p3 { margin: 1px 0 0 24px; padding-left: 3px; }

/* tabs of the docked managers */
.dock { display: flex; align-items: flex-end; height: 23px; padding-left: 1px; gap: 1px; }
.p2 .dock { height: 24px; }
.p3 .dock { height: 26px; }
.dock button { height: 17px; padding: 0 6px; background: #5e5e5e; color: #9c9c9c; border-radius: 4px 4px 0 0; line-height: 17px; font-family: "Open Sans", "Noto Sans", sans-serif; font-size: 11px; font-weight: 600; }
.dock button.on { height: 19px; padding: 0 6px 0 5px; background: #868686; color: #f2f2f2; font-weight: 700; border-top: 1px solid #a5a5a5; }

/* menu bars */
.bar {
  display: flex; align-items: center; gap: 15px;
  height: 22px; margin-left: 1px; padding: 0 5px;
  background: linear-gradient(#838383, #8e8e8e);
}
.bar .grip { width: 12px; height: 12px; margin-right: -6px; background: repeating-linear-gradient(120deg, #5c5c5c 0 1px, #a3a3a3 1px 3px); }
.tools { display: flex; margin-left: auto; }
.tools.obj { gap: 3px; }
.tools.att { gap: 9px; }
.tools.att svg:nth-child(2) { margin-left: -5px; }
.tools.att svg:nth-child(4) { margin-left: 4px; }
.bar.low { height: 21px; border-bottom: 1px solid #c2c2c2; box-shadow: inset 0 -1px #6b6b6b; }

/* object tree */
.tree {
  list-style: none; margin: 2px 0 0 1px; padding: 0 0 224px;
  border: 1px solid #686868; border-right: 0; border-bottom-color: #bdbdbd;
  background:
    linear-gradient(#686868, #686868) 178px 0 / 1px 100% no-repeat,
    linear-gradient(#686868, #686868) 217px 0 / 1px 100% no-repeat;
  box-shadow: 0 -1px #bbb, 0 -2px #686868, 0 2px #979797, 0 3px #686868;
}
.p3 .tree { padding-bottom: 121px; }
.tree li { display: grid; grid-template: 20px / 179px 39px 1fr; }
.tree li > div { display: flex; background: #a0a0a0; border-right: 1px solid #686868; line-height: 24px; white-space: nowrap; min-width: 0; }
.tree li > div:last-child { border-right: 0; background: #a9a9a9; padding-left: 1px; }
.tree li:nth-child(even) > div { background: #9a9a9a; }
.tree li:nth-child(even) > div:last-child { background: #a2a2a2; }
.tw { width: 16px; height: 20px; }
.ic { width: 16px; height: 16px; margin: 3px 2px 0 0; }
.sub .tw { width: 26px; }
.sub .ic { width: 17px; height: 17px; margin-top: 2px; }
.st { width: 38px; height: 20px; }
.tg { width: 18px; height: 18px; margin-right: 3px; }
.tg.picked { border: 1px solid #fff; }

/* attribute manager */
.attrs { margin: 6px 0 0 1px; flex: 1; border-left: 1px solid #b5b5b5; }
.title {
  display: flex; align-items: center; gap: 11px;
  height: 17px; margin: 0; padding-left: 2px;
  background: linear-gradient(#707070, #636363); color: #fff;
  border-bottom: 1px solid #3c3c3c; border-top: 1px solid #a9a9a9;
  font-size: 12px; font-weight: 400; line-height: 15px;
}
.title.idle { background: #979797; color: #5c5c5c; border-bottom-color: #6b6b6b; }
.attrs .bar { margin-left: 0; padding-left: 4px; }
.object { display: flex; align-items: center; gap: 4px; height: 22px; margin: 2px 0 2px 1px; }
.object svg { width: 22px; height: 22px; }
.tabs { display: flex; width: 362px; height: 18px; margin-left: 1px; border: 1px solid #5f5f5f; border-radius: 5px; overflow: hidden; }
.tabs button { flex: 1 1 0; background: #868686; color: #c6c6c6; white-space: nowrap; line-height: 16px; }
.tabs button + button { border-left: 1px solid #5f5f5f; }
.tabs button.on { background: #cfcfcf; color: #000; }
.tabs.wide { width: 293px; }
.banner {
  display: flex; align-items: center; gap: 5px; height: 16px; margin: 2px 4px 4px 2px;
  background: linear-gradient(90deg, #14619d 34px, #102a55 120px); color: #fff;
}
.banner b { font: 700 14px/16px "Open Sans", "Noto Sans", sans-serif; }
.banner span { font-weight: 300; }
h3 { height: 15px; margin: 0 4px 4px 1px; padding-left: 2px; background: #5d5d5d; color: #cdcdcd; font: 700 12px/15px "Open Sans", "Noto Sans", sans-serif; }

.form { --lab: 127px; margin-right: 4px; }
.p2 .form { --lab: 201px; }
.p2 .sun { --lab: 83px; }
.p2 .sky { --lab: 139px; }
.p2 .tone { --lab: 129px; width: 244px; }
.p3 .form { --lab: 161px; }
.duo { display: grid; grid-template-columns: 254px 1fr; }

.f { display: grid; grid-template-columns: var(--lab) 1fr; height: 19px; }
.f.c { height: 18px; }
.f.gap { margin-top: 7px; }
.form hr { height: 2px; margin: 2px 0 3px 1px; border: 0; background: linear-gradient(#626262 50%, #c0c0c0 50%); }
.f > label { display: flex; align-items: center; padding: 3px 3px 0 4px; white-space: nowrap; min-width: 0; }
.f > label::before { content: ""; flex: none; width: 5px; height: 5px; margin: 0 2px 3px 0; border: 1px solid #000; border-radius: 50%; }
.f > label::after { content: ""; flex: 1; height: 1px; margin: 8px 0 0 2px; background: repeating-linear-gradient(270deg, #4a4a4a 0 2px, transparent 2px 6px); }
.f.off > label { color: #626262; }
.f.off > label::before { visibility: hidden; }
.f > label.more::after { margin-right: 10px; }
.v { display: flex; align-items: flex-start; min-width: 0; }

/* drop-downs */
.sel { position: relative; flex: 1; margin-left: 1px; }
.sel select {
  display: block; width: 100%; height: 18px; padding: 0 20px 1px 6px;
  appearance: none; border: 1px solid #555; border-radius: 6px;
  background: linear-gradient(#787878, #919191); color: #d2d2d2; box-shadow: 0 1px #a6a6a6;
}
.sel::after { content: ""; position: absolute; right: 5px; top: 7px; border: 4px solid transparent; border-top: 5px solid #d8d8d8; border-bottom: 0; }
.off .sel select { opacity: 1; color: #5f5f5f; border-color: #757575; background: linear-gradient(#8b8b8b, #959595); }
.off .sel::after { border-top-color: #5d5d5d; }

/* number boxes and sliders */
.num { position: relative; flex: none; width: 74px; height: 17px; margin: 1px 0 0 1px; color: #e2e2e2; }
.num input {
  display: block; width: 100%; height: 16px; padding: 0 12px 0 5px;
  background: #5b5b5b; border-top: 1px solid #404040; border-right: 1px solid #a8a8a8; border-radius: 6px 0 0 6px;
  box-shadow: 0 1px #a6a6a6; line-height: 15px;
}
.num svg { position: absolute; right: 3px; top: 3px; width: 5px; height: 11px; }
.off .num { color: #b0b0b0; }
.off .num input { background: #747474; color: #595959; border-top-color: #636363; border-right-color: #9b9b9b; }
input[type=range] {
  --dark: #5b5b5b; --lite: #808080; --mark: #ffa500;
  flex: 1; min-width: 0; height: 16px; margin-top: 1px; appearance: none;
  background: linear-gradient(90deg, var(--lite) var(--v), var(--dark) var(--v));
  border-top: 1px solid #404040; border-radius: 0 6px 6px 0; box-shadow: 0 1px #a6a6a6;
}
input[type=range].tick {
  background:
    linear-gradient(#b8842a, #b8842a) 50% 100% / 1px 4px no-repeat,
    linear-gradient(90deg, var(--lite) var(--v), var(--dark) var(--v));
}
.tone input[type=range].tick, .sky input[type=range].tick {
  background:
    linear-gradient(#d8921c, #d8921c) 55% 100% / 1px 4px no-repeat,
    linear-gradient(90deg, var(--lite) var(--v), var(--dark) var(--v));
}
input[type=range]::-webkit-slider-thumb { appearance: none; width: 2px; height: 15px; background: var(--mark); }
.off input[type=range] { --dark: #747474; --lite: #808080; --mark: #a6a6a6; border-top-color: #636363; }

/* tick boxes */
input[type=checkbox] {
  appearance: none; position: relative; width: 13px; height: 13px; margin-top: 2px;
  background: linear-gradient(#747474, #8f8f8f); border: 1px solid #3a3a3a; border-radius: 4px;
}
input[type=checkbox]:checked { background: #606060; }
input[type=checkbox]:checked::after {
  content: ""; position: absolute; left: 2px; top: 0; width: 8px; height: 10px; background: #f2f2f2;
  clip-path: polygon(0 45%, 25% 40%, 38% 65%, 80% 0, 100% 0, 45% 100%, 28% 100%);
}
.off input[type=checkbox] { background: #919191; border-color: #6c6c6c; }

/* colour swatches and small buttons */
.swatch { width: 35px; height: 16px; border: 1px solid #6d6d6d; border-right-color: #b4b4b4; border-bottom-color: #b4b4b4; }
.v:has(> .swatch)::before {
  content: ""; margin: 2px 4px 0 -9px; border: 4px solid transparent; border-left: 5px solid #1c1c1c; border-right: 0;
}
.v:has(> .pick)::before { content: ""; margin: 4px 2px 0 -10px; border: 4px solid transparent; border-top: 5px solid #1c1c1c; border-bottom: 0; }
.path { flex: 1; min-width: 0; height: 16px; margin: 1px 4px 0 1px; background: #747474; border-top: 1px solid #636363; border-radius: 6px; box-shadow: 0 1px #a3a3a3; }
.btn { height: 18px; background: linear-gradient(#7b7b7b, #8f8f8f); border: 1px solid #5b5b5b; border-radius: 5px; line-height: 14px; }
.btn.dots { width: 34px; background: #8f8f8f; border-color: #787878; color: #606060; }
.f.wb { height: 57px; align-items: start; }
.pick { display: grid; gap: 2px; width: 28px; }
.swatch.tan { width: 28px; height: 36px; background: #bf8960; }
.btn.go { display: grid; place-items: center; }
.btn.go::after { content: ""; border: 3px solid transparent; border-left: 4px solid #d5d5d5; border-right: 0; }
.rgb { flex: 1; display: grid; grid-template-columns: 12px 69px 1fr; grid-auto-rows: 19px; margin-left: 5px; }
.rgb label { padding-top: 2px; }
.rgb .num { width: 68px; }
input[type=range].chan { width: 100%; height: 12px; margin: 7px 0 0; border: 0; border-radius: 0; box-shadow: none; padding: 0 1px 0 3px; background: linear-gradient(90deg, #000, var(--hue)) 4px 0 / calc(100% - 5px) 4px no-repeat; }
.chan.red { --hue: #f00; }
.chan.green { --hue: #0f0; }
.chan.blue { --hue: #00f; }
input[type=range].chan::-webkit-slider-thumb {
  width: 9px; height: 7px; margin-top: 4px;
  background: conic-gradient(from 148deg at 50% 2px, #fff 64deg, #000 0);
  border-bottom: 1px solid #000; clip-path: polygon(50% 0, 100% 100%, 0 100%);
}
```
